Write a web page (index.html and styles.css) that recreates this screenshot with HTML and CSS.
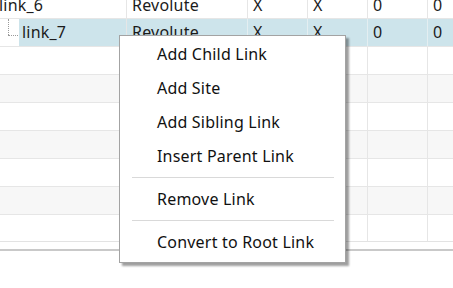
FILE: index.html
```html
<!DOCTYPE html>
<html>
<head>
<meta charset="utf-8">
<link rel="stylesheet" href="styles.css">
</head>
<body>
<div class="view">
  <div class="table">
    <div class="row first">
      <div class="cell name"><span class="t0">link_6</span></div>
      <div class="cell">Revolute</div>
      <div class="cell">X</div>
      <div class="cell">X</div>
      <div class="cell">0</div>
      <div class="cell">0</div>
    </div>
    <div class="row sel">
      <div class="cell name child"><span class="branch"></span><span class="label">link_7</span></div>
      <div class="cell">Revolute</div>
      <div class="cell">X</div>
      <div class="cell">X</div>
      <div class="cell">0</div>
      <div class="cell">0</div>
    </div>
    <div class="row"><div class="cell name"></div><div class="cell"></div><div class="cell"></div><div class="cell"></div><div class="cell"></div><div class="cell"></div></div>
    <div class="row alt"><div class="cell name"></div><div class="cell"></div><div class="cell"></div><div class="cell"></div><div class="cell"></div><div class="cell"></div></div>
    <div class="row"><div class="cell name"></div><div class="cell"></div><div class="cell"></div><div class="cell"></div><div class="cell"></div><div class="cell"></div></div>
    <div class="row alt"><div class="cell name"></div><div class="cell"></div><div class="cell"></div><div class="cell"></div><div class="cell"></div><div class="cell"></div></div>
    <div class="row"><div class="cell name"></div><div class="cell"></div><div class="cell"></div><div class="cell"></div><div class="cell"></div><div class="cell"></div></div>
    <div class="row alt"><div class="cell name"></div><div class="cell"></div><div class="cell"></div><div class="cell"></div><div class="cell"></div><div class="cell"></div></div>
    <div class="row last"><div class="cell name"></div><div class="cell"></div><div class="cell"></div><div class="cell"></div><div class="cell"></div><div class="cell"></div></div>
  </div>
  <div class="bottom-edge"></div>

  <div class="menu">
    <div class="item">Add Child Link</div>
    <div class="item">Add Site</div>
    <div class="item">Add Sibling Link</div>
    <div class="item">Insert Parent Link</div>
    <div class="sep"></div>
    <div class="item">Remove Link</div>
    <div class="sep"></div>
    <div class="item">Convert to Root Link</div>
  </div>
</div>
</body>
</html>
```

FILE: styles.css
```css
html, body {
  margin: 0;
  padding: 0;
  background: #ffffff;
}
body {
  width: 453px;
  height: 288px;
  overflow: hidden;
  font-family: "Noto Sans", "Open Sans", sans-serif;
  font-size: 16px;
  letter-spacing: 0.2px;
  color: #1b1b1b;
}
.view {
  position: relative;
  width: 453px;
  height: 288px;
  overflow: hidden;
}
.table {
  margin-top: -9px;
}
.row {
  display: grid;
  grid-template-columns: 127px 121px 60px 60px 60px 1fr;
  height: 28px;
  box-sizing: border-box;
  border-bottom: 1px solid #e6e6e6;
  background: #ffffff;
}
.row.alt {
  background: #f7f7f7;
}
.row.sel {
  background: #cde4eb;
}
.row.last {
  height: 27px;
  border-bottom: 1px solid #e3e3e3;
}
.cell {
  box-sizing: border-box;
  border-right: 1px solid #e6e6e6;
  padding-left: 5px;
  line-height: 27px;
  white-space: nowrap;
  overflow: hidden;
}
.row.first .cell {
  line-height: 29px;
}
.row.sel .cell {
  border-right-color: #e4eef1;
}
.cell:last-child {
  border-right: none;
}
.cell.name {
  padding-left: 0;
}
.t0 {
  margin-left: -1px;
}
.row.sel .cell.child {
  background: #ffffff;
  display: flex;
  border-right-color: #e6e6e6;
}
.branch {
  position: relative;
  width: 19px;
  flex: none;
}
.branch::before {
  content: "";
  position: absolute;
  left: 8px;
  top: 0;
  height: 16px;
  border-left: 1px dotted #9a9a9a;
}
.branch::after {
  content: "";
  position: absolute;
  left: 8px;
  top: 16px;
  width: 10px;
  border-top: 1px dotted #9a9a9a;
}
.label {
  flex: 1;
  background: #cde4eb;
  padding-left: 3px;
}
.bottom-edge {
  margin-top: 7px;
  height: 2px;
  background: #c9c9c9;
}
.menu {
  position: absolute;
  left: 119px;
  top: 35px;
  width: 227px;
  box-sizing: border-box;
  padding: 2px 0;
  background: #ffffff;
  border: 1px solid #a3a3a3;
  box-shadow: 3px 3px 2px rgba(0, 0, 0, 0.38);
}
.item {
  height: 34px;
  line-height: 32px;
  padding-left: 37px;
  color: #111111;
  white-space: nowrap;
}
.sep {
  height: 1px;
  background: #d9d9d9;
  margin: 3px 11px 5px 12px;
}
```
